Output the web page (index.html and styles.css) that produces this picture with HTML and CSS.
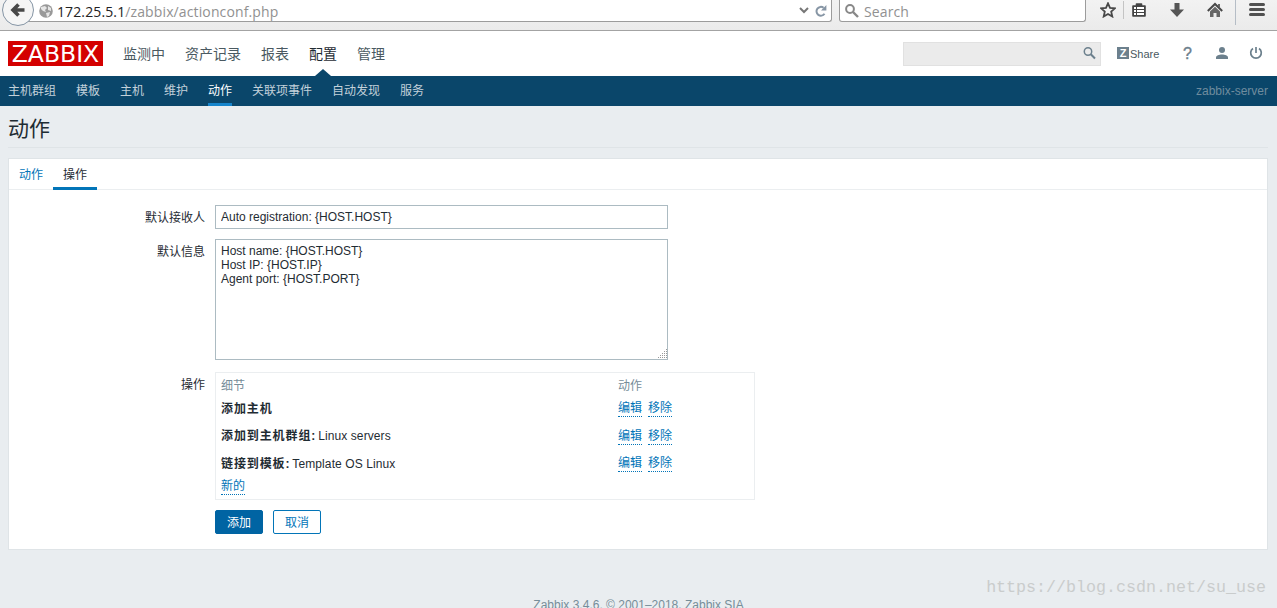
FILE: index.html
```html
<!DOCTYPE html>
<html lang="zh-CN">
<head>
  <meta charset="UTF-8">
  <title>动作</title>
  <link rel="stylesheet" href="styles.css">
</head>
<body>

<div class="browser-bar">
  <div class="url-bar">
    <svg class="globe" width="14" height="14" viewBox="0 0 14 14"><circle cx="7" cy="7" r="6.8" fill="#999"/><path d="M2 3l4-1 2 2-2 2 1 2-3-1-2-2zM9 2l3 2v3l-3-1zM7 9l4-1-1 4-2 1z" fill="#e6e6e6"/></svg>
    <span class="url"><b>172.25.5.1</b>/zabbix/actionconf.php</span>
    <svg class="chevron" width="10" height="7" viewBox="0 0 10 7"><path d="M1 1l4 4 4-4" fill="none" stroke="#777" stroke-width="2"/></svg>
    <svg width="12" height="12" viewBox="0 0 12 12"><path d="M9.5 8.8A4.4 4.4 0 1 1 8.6 2.8" fill="none" stroke="#8796a5" stroke-width="2"/><path d="M11.4 0v5.6H6z" fill="#8796a5"/></svg>
  </div>
  <div class="search-bar">
    <svg width="14" height="14" viewBox="0 0 14 14"><circle cx="5" cy="5" r="3.9" fill="none" stroke="#888" stroke-width="2"/><path d="M8 8l5 5" stroke="#888" stroke-width="2.4"/></svg>
    <span>Search</span>
  </div>
  <div class="toolbar">
    <svg width="16" height="16" viewBox="0 0 16 16"><path d="M8 1.3l2 4.5 4.9.5-3.7 3.3 1.1 4.9L8 12l-4.3 2.5 1.1-4.9L1.1 6.3 6 5.8z" fill="#f4f4f4" stroke="#484848" stroke-width="1.8"/></svg>
    <i class="divider"></i>
    <svg class="clip" width="14" height="16" viewBox="0 0 14 16"><path d="M1 4h3.500V2h5v2H13v10H1z" fill="#444" stroke="#444" stroke-width="1.6" stroke-linejoin="round"/><path d="M2 6h2M5 6h7M2 9h2M5 9h7M2 12h2M5 12h7" stroke="#fff" stroke-width="1.8"/></svg>
    <svg class="down" width="14" height="16" viewBox="0 0 14 16"><path d="M4.500 1h5v6.500H14L7 15 0 7.500h4.500z" fill="#555"/></svg>
    <svg class="home" width="16" height="16" viewBox="0 0 16 16"><path d="M.8 9L8 2l7.200 7" fill="none" stroke="#484848" stroke-width="2"/><path d="M3 9.500l5-4.700 5 4.700V15H9.500v-4h-3v4H3zM11 2h2v4l-2-2z" fill="#666"/></svg>
    <i class="divider tall"></i>
    <svg class="burger" width="16" height="16" viewBox="0 0 16 16"><path d="M1.500 2.500h13M1.500 7.500h13M1.500 12.500h13" stroke="#505050" stroke-width="3" stroke-linecap="round"/></svg>
  </div>
  <div class="back">
    <svg width="16" height="16" viewBox="0 0 16 16"><path d="M8.500 2.500L3 8l5.500 5.500M3.500 8h11" fill="none" stroke="#484848" stroke-width="3.600"/></svg>
  </div>
</div>

<header class="header">
  <div class="logo">ZABBIX</div>
  <nav class="top-nav">
    <a>监测中</a>
    <a>资产记录</a>
    <a>报表</a>
    <a class="selected">配置</a>
    <a>管理</a>
  </nav>
  <div class="search">
    <svg width="13" height="13" viewBox="0 0 13 13"><circle cx="5" cy="4.500" r="3.700" fill="none" stroke="#6c808d" stroke-width="1.500"/><path d="M7.800 7.300L12 11.500" stroke="#6c808d" stroke-width="2"/></svg>
  </div>
  <div class="user-nav">
    <a class="share"><span class="z">Z</span>Share</a>
    <a class="help">?</a>
    <svg width="12" height="12" viewBox="0 0 12 12"><circle cx="6" cy="3" r="3" fill="#6c808d"/><path d="M0 12v-1.500C0 8.500 3 7.500 6 7.500s6 1 6 3V12z" fill="#6c808d"/></svg>
    <svg width="14" height="14" viewBox="0 0 14 14"><path d="M4 2.500a5.300 5.300 0 1 0 6 0M7 1v6" fill="none" stroke="#6c808d" stroke-width="1.700"/></svg>
  </div>
</header>

<nav class="sub-nav">
  <a>主机群组</a>
  <a>模板</a>
  <a>主机</a>
  <a>维护</a>
  <a class="selected">动作</a>
  <a>关联项事件</a>
  <a>自动发现</a>
  <a>服务</a>
  <span class="server-name">zabbix-server</span>
</nav>

<main class="article">
  <h1>动作</h1>

  <form class="panel">
    <div class="tabs">
      <a>动作</a>
      <a class="active">操作</a>
    </div>

    <div class="form-grid">
      <label for="recipient">默认接收人</label>
      <input type="text" id="recipient" value="Auto registration: {HOST.HOST}">

      <label for="message">默认信息</label>
      <div class="message-box">
        <textarea id="message">Host name: {HOST.HOST}
Host IP: {HOST.IP}
Agent port: {HOST.PORT}</textarea>
        <svg class="grip" width="10" height="10" viewBox="0 0 10 10"><path d="M9 .5h1M7 2.500h1M9 2.500h1M5 4.500h1M7 4.500h1M9 4.500h1M3 6.500h1M5 6.500h1M7 6.500h1M9 6.500h1M1 8.500h1M3 8.500h1M5 8.500h1M7 8.500h1M9 8.500h1" stroke="#999"/></svg>
      </div>

      <label>操作</label>
      <div class="operations">
        <div class="row head"><span>细节</span><span>动作</span></div>
        <div class="row">
          <span><b>添加主机</b></span>
          <span class="links"><a>编辑</a><a>移除</a></span>
        </div>
        <div class="row">
          <span><b>添加到主机群组</b><strong>:</strong> Linux servers</span>
          <span class="links"><a>编辑</a><a>移除</a></span>
        </div>
        <div class="row">
          <span><b>链接到模板</b><strong>:</strong> Template OS Linux</span>
          <span class="links"><a>编辑</a><a>移除</a></span>
        </div>
        <div class="row new"><span class="links"><a>新的</a></span></div>
      </div>

      <div class="buttons">
        <button type="button">添加</button>
        <button type="button" class="alt">取消</button>
      </div>
    </div>
  </form>
</main>

<footer>Zabbix 3.4.6. © 2001–2018, Zabbix SIA</footer>
<div class="watermark">https://blog.csdn.net/su_use</div>

</body>
</html>
```
FILE: styles.css
```css
* {
  box-sizing: border-box;
}

body {
  margin: 0;
  height: 608px;
  overflow: hidden;
  position: relative;
  background-color: #e9edf0;
  color: #1f2c33;
  font: 12px/14px "Liberation Sans", "Noto Sans CJK SC", sans-serif;
}

svg {
  display: block;
  flex: none;
}

/* browser toolbar */
.browser-bar {
  position: relative;
  display: flex;
  height: 31px;
  overflow: hidden;
  background: linear-gradient(#f2f2f2, #ebebeb);
  border-bottom: 1px solid #a3a3a3;
  font: 14px/20px "Open Sans", "Noto Sans", sans-serif;
  color: #919191;
}

.url-bar, .search-bar {
  display: flex;
  align-items: center;
  height: 22px;
  background: #fff;
  border: 1px solid #9c9c9c;
  border-top: 0;
  border-radius: 0 0 3px 3px;
}

.url-bar {
  width: 817px;
  margin-left: 15px;
  padding-left: 23px;
}

.url-bar span, .search-bar span {
  position: relative;
  top: 1px;
  letter-spacing: .12px;
}

.url {
  flex: 1;
  margin-left: 4px;
}

.url b {
  font-weight: 400;
  color: #222;
}

.chevron {
  margin-right: 6px;
}

.url-bar svg:last-child {
  margin-right: 4px;
}

.search-bar {
  width: 247px;
  margin-left: 7px;
  padding-left: 5px;
  gap: 5px;
}

.toolbar {
  display: flex;
  padding: 2px 0 0 14px;
}

.divider {
  width: 1px;
  height: 18px;
  margin: -1px 8px 0 7px;
  background: #c4c4c4;
}

.down {
  margin-left: 24px;
}

.home {
  margin-left: 23px;
}

.divider.tall {
  height: 25px;
  margin: -2px 13px 0 12px;
  background: #b5bdc6;
}

.back {
  position: absolute;
  left: 2px;
  top: -6px;
  width: 32px;
  height: 32px;
  padding: 7px;
  background: #f5f5f5;
  border: 1px solid #8595a5;
  border-radius: 50%;
}

/* header */
.header {
  display: flex;
  align-items: center;
  height: 45px;
  padding: 0 14px 0 8px;
  background: #fff;
}

.logo {
  width: 95px;
  height: 25px;
  background: #d40000;
  color: #fff;
  font: 23.500px/26px "DejaVu Sans", sans-serif;
  text-align: center;
}

.top-nav {
  display: flex;
  align-self: stretch;
  gap: 20px;
  margin-left: 20px;
  font-size: 14px;
  line-height: 47px;
  color: #4a5961;
}

.top-nav .selected {
  position: relative;
  color: #1f2c33;
}

.top-nav .selected::after {
  content: "";
  position: absolute;
  left: 6px;
  bottom: 0;
  border: 8px solid transparent;
  border-top: 0;
  border-bottom: 7px solid #0a466a;
}

.search {
  display: flex;
  justify-content: flex-end;
  width: 198px;
  height: 24px;
  margin-left: auto;
  padding: 4px;
  background: #ebebeb;
  border: 1px solid #e1e1e1;
}

.user-nav {
  display: flex;
  align-items: center;
  margin-left: 16px;
  color: #4a5961;
}

.share {
  display: flex;
  align-items: center;
  gap: 1px;
  width: 67px;
  font-size: 11px;
}

.z {
  width: 12px;
  height: 12px;
  margin-top: -1px;
  background: #6c808d;
  color: #fff;
  font-weight: 700;
  line-height: 12px;
  text-align: center;
}

.help {
  width: 32px;
  font-size: 16px;
  text-indent: -1px;
  color: #6c808d;
  -webkit-text-stroke: .4px #6c808d;
}

.user-nav svg {
  margin-top: -1px;
}

.user-nav svg:last-child {
  margin-left: 21px;
}

.sub-nav {
  display: flex;
  gap: 20px;
  height: 30px;
  padding: 0 9px 0 8px;
  background: #0a466a;
  color: #c3d1da;
  line-height: 31px;
}

.sub-nav .selected {
  color: #fff;
  border-bottom: 3px solid #1584cb;
}

.server-name {
  margin-left: auto;
  color: #6f8c9e;
}

/* content */
.article {
  padding: 0 9px 0 8px;
}

h1 {
  height: 42px;
  margin: 0 0 10px;
  border-bottom: 1px solid #dfe4e7;
  font-size: 21px;
  font-weight: 400;
  line-height: 46px;
}

.panel {
  height: 392px;
  background: #fff;
  border: 1px solid #dfe4e7;
}

.tabs {
  display: flex;
  height: 31px;
  border-bottom: 1px solid #ebeef0;
  line-height: 32px;
  color: #0275b8;
}

.tabs a {
  height: 31px;
  padding: 0 10px;
}

.tabs .active {
  color: #1f2c33;
  border-bottom: 3px solid #0275b8;
}

.form-grid {
  display: grid;
  grid-template-columns: 196px 540px;
  column-gap: 10px;
  padding-top: 15px;
}

label {
  line-height: 26px;
  height: 24px;
  text-align: right;
}

input, textarea {
  display: block;
  width: 453px;
  margin: 0;
  padding: 0 5px;
  border: 1px solid #acbbc2;
  background: #fff;
  color: #1f2c33;
  font: inherit;
}

input {
  height: 24px;
}

textarea {
  height: 121px;
  padding-top: 4px;
  resize: none;
}

.message-box {
  position: relative;
  width: 453px;
  margin: 10px 0 12px;
}

label[for="message"] {
  margin-top: 10px;
}

.grip {
  position: absolute;
  right: 1px;
  bottom: 1px;
}

.operations {
  height: 128px;
  padding: 3px 5px;
  border: 1px solid #ebeef0;
}

.row {
  display: grid;
  grid-template-columns: 397px 1fr;
  align-items: center;
  height: 27.500px;
  letter-spacing: .1px;
}

.row b {
  letter-spacing: .9px;
}

.row strong {
  letter-spacing: -.6px;
}

.row.head {
  height: 19px;
  line-height: 18px;
  color: #768d99;
}

.row.new {
  height: 18px;
}

.links {
  display: flex;
  gap: 6px;
}

.links a {
  color: #0275b8;
  border-bottom: 1px dotted #0275b8;
  height: 17px;
  width: 24px;
  line-height: 17px;
  letter-spacing: 0;
}

.buttons {
  grid-column: 2;
  display: flex;
  gap: 10px;
  margin-top: 10px;
}

button {
  width: 48px;
  height: 24px;
  padding: 1px 0 0;
  border: 1px solid #0064a3;
  border-radius: 2px;
  background: #0064a3;
  color: #fff;
  font: inherit;
}

button.alt {
  background: #fff;
  border-color: #0275b8;
  color: #0275b8;
}

footer {
  margin-top: 48px;
  text-align: center;
  color: #768d99;
}

.watermark {
  position: absolute;
  right: 11px;
  top: 577px;
  color: #c9cccc;
  font: 16.670px/22px "Liberation Mono", monospace;
}
```
